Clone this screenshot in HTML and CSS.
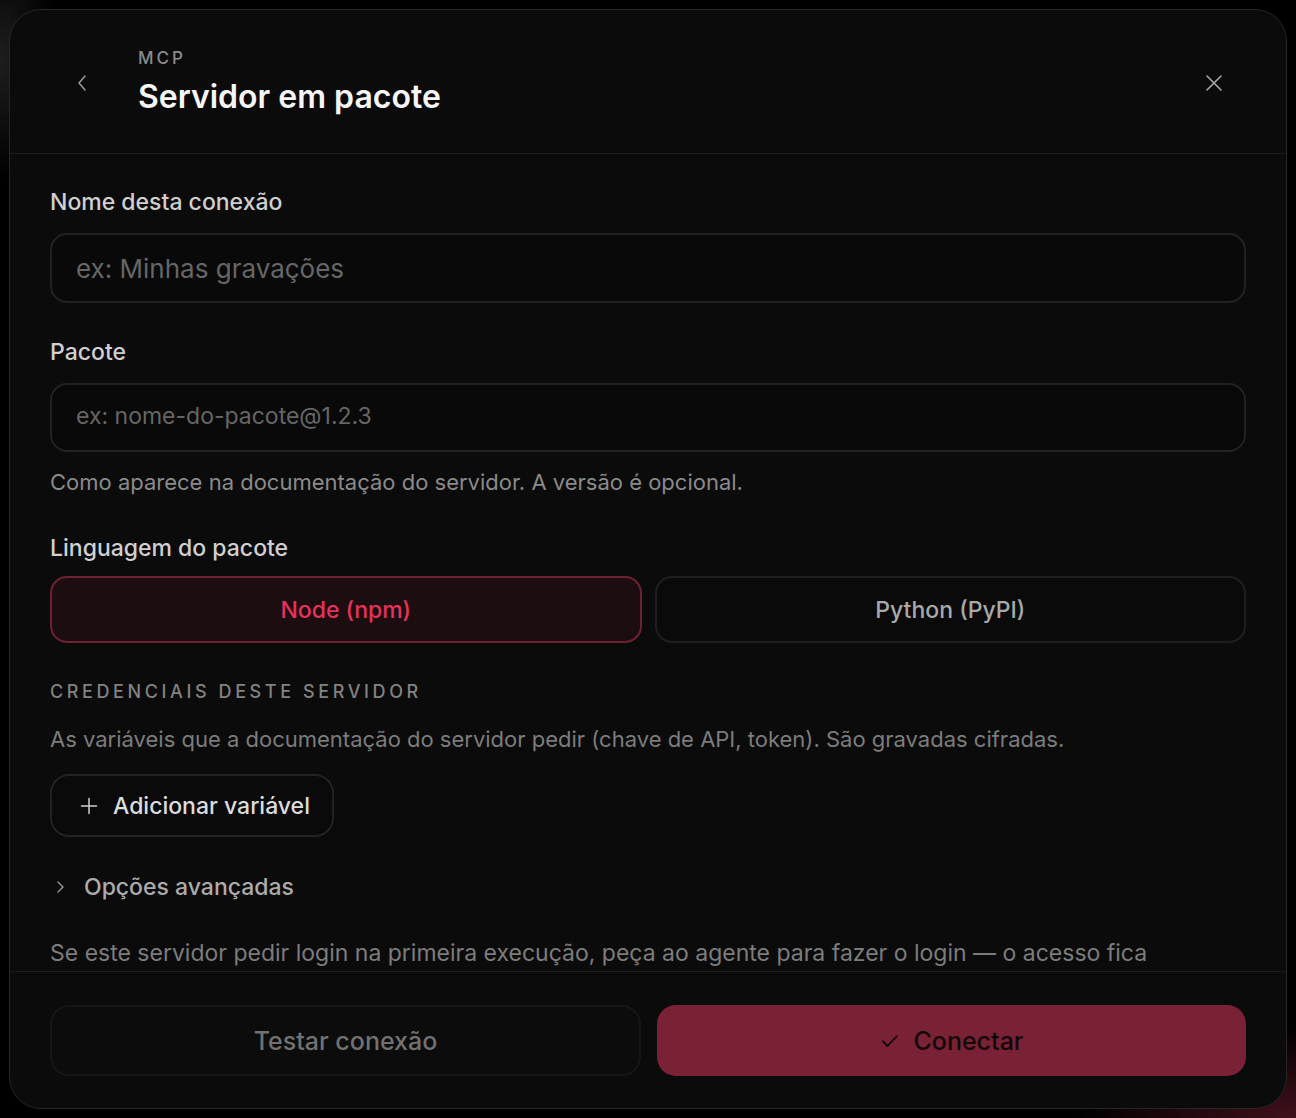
FILE: index.html
```html
<!DOCTYPE html>
<html lang="pt">
<head>
    <meta charset="UTF-8">
    <meta name="viewport" content="width=device-width, initial-scale=1.0">
    <title>Servidor em pacote</title>
    <link rel="stylesheet" href="styles.css">
</head>
<body>

    <div class="modal">

        <!-- Header -->
        <div class="modal-header">
            <button class="icon-button back-button" aria-label="Voltar">
                <svg width="12" height="18" viewBox="0 0 12 18" fill="none" stroke="currentColor" stroke-width="1.5" stroke-linecap="round" stroke-linejoin="round"><path d="M9 2 L3 9 L9 16"/></svg>
            </button>
            <div class="header-titles">
                <div class="eyebrow">MCP</div>
                <h1>Servidor em pacote</h1>
            </div>
            <button class="icon-button close-button" aria-label="Fechar">
                <svg width="18" height="18" viewBox="0 0 18 18" fill="none" stroke="currentColor" stroke-width="1.6" stroke-linecap="round"><path d="M2 2 L16 16 M16 2 L2 16"/></svg>
            </button>
        </div>

        <!-- Form -->
        <div class="modal-body">
            <label class="field-label first">Nome desta conexão</label>
            <input class="text-input" type="text" placeholder="ex: Minhas gravações">

            <label class="field-label">Pacote</label>
            <input class="text-input small" type="text" placeholder="ex: nome-do-pacote@1.2.3">
            <p class="hint">Como aparece na documentação do servidor. A versão é opcional.</p>

            <label class="field-label lang-label">Linguagem do pacote</label>
            <div class="toggle-group">
                <button class="toggle active">Node (npm)</button>
                <button class="toggle">Python (PyPI)</button>
            </div>

            <div class="section-title">Credenciais deste servidor</div>
            <p class="section-desc">As variáveis que a documentação do servidor pedir (chave de API, token). São gravadas cifradas.</p>
            <button class="add-button">
                <svg width="18" height="18" viewBox="0 0 18 18" fill="none" stroke="currentColor" stroke-width="1.5" stroke-linecap="round"><path d="M9 1.5 V16.5 M1.5 9 H16.5"/></svg>
                Adicionar variável
            </button>

            <div class="advanced">
                <svg width="10" height="14" viewBox="0 0 10 14" fill="none" stroke="currentColor" stroke-width="1.4" stroke-linecap="round" stroke-linejoin="round"><path d="M3 2 L8 7 L3 12"/></svg>
                <span>Opções avançadas</span>
            </div>

            <p class="login-note">Se este servidor pedir login na primeira execução, peça ao agente para fazer o login — o acesso fica guardado para as próximas execuções.</p>
        </div>

        <!-- Footer actions -->
        <div class="modal-footer">
            <button class="footer-button secondary">Testar conexão</button>
            <button class="footer-button primary">
                <svg width="18" height="16" viewBox="0 0 18 16" fill="none" stroke="currentColor" stroke-width="1.8" stroke-linecap="round" stroke-linejoin="round"><path d="M2 8.5 L6.5 13 L16 3"/></svg>
                Conectar
            </button>
        </div>

    </div>

</body>
</html>
```

FILE: styles.css
```css
* {
    box-sizing: border-box;
}
html, body {
    height: 100%;
}
body {
    margin: 0;
    font-family: Inter, "Noto Sans", sans-serif;
    background:
        radial-gradient(ellipse 60px 120px at 0 60px, rgba(60, 60, 60, 0.5), transparent),
        radial-gradient(ellipse 220px 90px at 1296px 1118px, rgba(120, 30, 50, 0.55), transparent),
        #000;
    overflow: hidden;
}
button {
    font-family: inherit;
    cursor: pointer;
}
.modal {
    margin: 9px;
    width: 1278px;
    height: 1100px;
    background-color: #0b0b0b;
    border: 1px solid #262626;
    border-radius: 32px;
    display: flex;
    flex-direction: column;
    overflow: hidden;
}

/* header */
.modal-header {
    height: 144px;
    flex-shrink: 0;
    display: flex;
    align-items: center;
    border-bottom: 1px solid #1f1f1f;
    padding: 0 60px 0 60px;
}
.icon-button {
    background: none;
    border: none;
    padding: 0;
    display: flex;
    align-items: center;
    justify-content: center;
}
.back-button {
    color: #9a9a9a;
    width: 24px;
    height: 24px;
    margin-right: 44px;
    margin-top: 2px;
}
.header-titles {
    flex: 1;
    margin-top: 0;
}
.eyebrow {
    font-size: 17px;
    font-weight: 500;
    letter-spacing: 3px;
    color: #8c8c8c;
    line-height: 22px;
}
h1 {
    margin: 9px 0 0;
    font-size: 32px;
    font-weight: 600;
    color: #f5f5f5;
    line-height: 38px;
    letter-spacing: 0;
}
.close-button {
    color: #a8a8a8;
    width: 24px;
    height: 24px;
    margin-top: 2px;
}

/* form */
.modal-body {
    flex: 1;
    overflow: hidden;
    padding: 0 40px;
    display: flex;
    flex-direction: column;
    align-items: flex-start;
}
.modal-body > * {
    flex-shrink: 0;
}
.field-label {
    display: block;
    font-size: 23px;
    font-weight: 500;
    color: #d0d0d0;
    line-height: 26px;
    margin-top: 36px;
    margin-bottom: 18px;
}
.field-label.first {
    margin-top: 35px;
}
.field-label.lang-label {
    margin-top: 40px;
    margin-bottom: 15px;
}
.text-input {
    width: 100%;
    height: 70px;
    background-color: #090909;
    border: 2px solid #222;
    border-radius: 17px;
    padding: 0 24px;
    font-family: inherit;
    font-size: 26px;
    color: #ddd;
    outline: none;
}
.text-input.small {
    height: 69px;
    font-size: 23px;
    padding-bottom: 3px;
}
.text-input::placeholder {
    color: #666;
}
.hint {
    margin: 17px 0 0;
    font-size: 22px;
    line-height: 26px;
    color: #8a8a8a;
}
.toggle-group {
    width: 100%;
    display: flex;
    gap: 13px;
}
.toggle {
    flex: 1;
    height: 67px;
    border-radius: 17px;
    border: 2px solid #1f1f1f;
    background-color: #0a0a0a;
    color: #a8a8a8;
    font-size: 23px;
    font-weight: 500;
}
.toggle.active {
    background-color: #1c0d11;
    border-color: #6e2131;
    color: #e5335a;
}
.section-title {
    margin-top: 38px;
    font-size: 18px;
    font-weight: 500;
    letter-spacing: 3.6px;
    text-transform: uppercase;
    color: #828282;
    line-height: 22px;
}
.section-desc {
    margin: 23px 0 0;
    font-size: 22px;
    line-height: 26px;
    color: #7c7c7c;
}
.add-button {
    margin-top: 22px;
    height: 63px;
    padding: 0 22px 0 28px;
    display: flex;
    align-items: center;
    gap: 15px;
    background-color: #0a0a0a;
    border: 2px solid #222;
    border-radius: 19px;
    color: #dcdcdc;
    font-size: 23px;
    font-weight: 500;
}
.add-button svg {
    color: #cfcfcf;
}
.advanced {
    margin-top: 36px;
    display: flex;
    align-items: center;
    gap: 19px;
    padding-left: 5px;
    font-size: 23px;
    font-weight: 500;
    line-height: 28px;
    color: #ababab;
}
.advanced svg {
    color: #9a9a9a;
}
.login-note {
    margin: 36px 0 0;
    max-width: 1180px;
    font-size: 23px;
    line-height: 32px;
    color: #7c7c7c;
}

/* footer */
.modal-footer {
    flex-shrink: 0;
    border-top: 1px solid #1d1d1d;
    padding: 33px 40px 32px;
    display: flex;
    gap: 16px;
}
.footer-button {
    flex: 1;
    height: 71px;
    border-radius: 19px;
    font-size: 25px;
    font-weight: 500;
    display: flex;
    align-items: center;
    justify-content: center;
    gap: 14px;
}
.footer-button.secondary {
    background-color: #0c0c0c;
    border: 2px solid #161616;
    color: #717171;
}
.footer-button.primary {
    background-color: #7a2235;
    border: none;
    color: #120709;
    padding-left: 8px;
}
```
